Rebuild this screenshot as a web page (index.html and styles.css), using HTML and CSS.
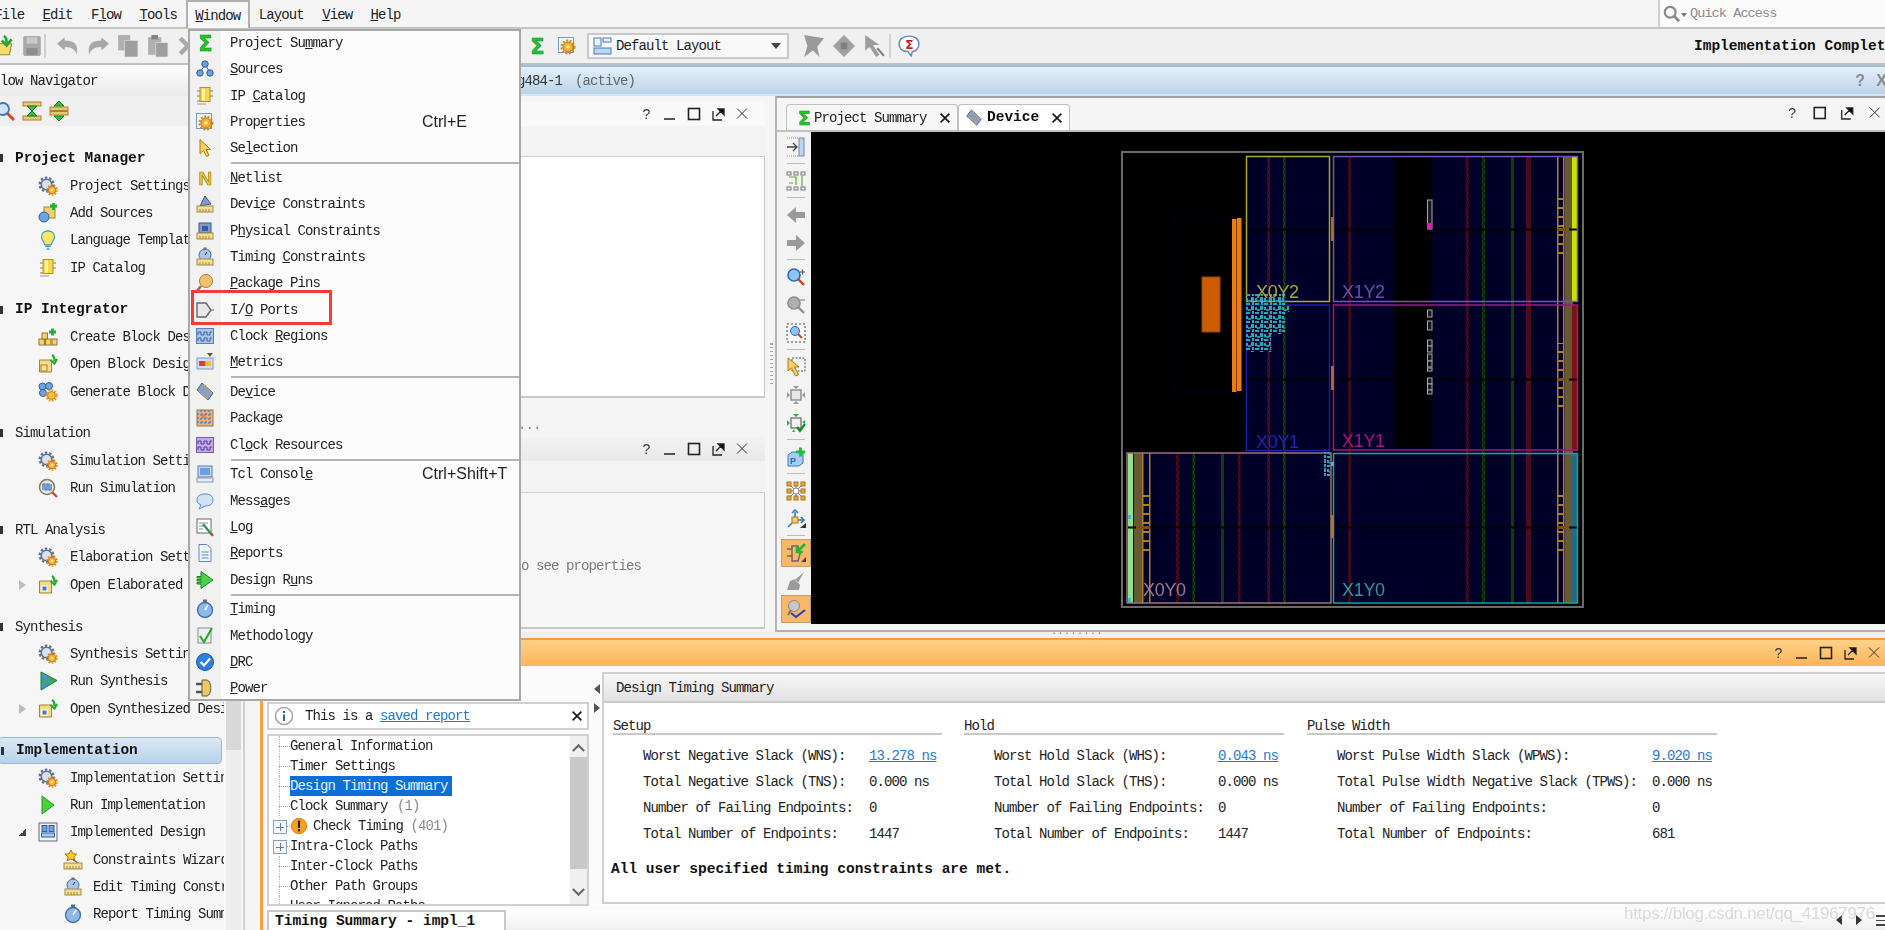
FILE: index.html
```html
<!DOCTYPE html>
<html lang="en">
<head>
<meta charset="utf-8">
<title>Vivado - Implemented Design</title>
<link rel="stylesheet" href="styles.css">
</head>
<body>
<svg class="sprite" aria-hidden="true">
  <defs>
    <symbol id="sigma" viewBox="0 0 20 20"><text x="10" y="17.5" text-anchor="middle" class="sig">Σ</text></symbol>
    <symbol id="sources" viewBox="0 0 20 20"><path d="M10 6 5 13M10 6l5 7" stroke="#557" fill="none"/><circle cx="10" cy="5" r="3.2" fill="#6fa0d8" stroke="#2f5f98"/><circle cx="5" cy="14" r="3.2" fill="#6fa0d8" stroke="#2f5f98"/><circle cx="15" cy="14" r="3.2" fill="#6fa0d8" stroke="#2f5f98"/></symbol>
    <symbol id="ip" viewBox="0 0 20 20"><path d="M2 5h3M2 10h3M2 15h3M15 5h3M15 10h3" stroke="#777"/><path d="M2 18h9" stroke="#999"/><rect x="5" y="1.5" width="10" height="14" fill="#f4d84a" stroke="#b8901a"/><rect x="7" y="2.5" width="3" height="12" fill="#fff3a8"/></symbol>
    <symbol id="props" viewBox="0 0 20 20"><rect x="1.5" y="1.5" width="15" height="15" fill="#eef3fa" stroke="#7d9ac0"/><circle cx="11" cy="11" r="6.5" fill="none" stroke="#d88a10" stroke-width="2" stroke-dasharray="2 1.5"/><circle cx="11" cy="11" r="5" fill="#f2b430" stroke="#b8760f"/><circle cx="11" cy="11" r="1.8" fill="#fff0a0"/></symbol>
    <symbol id="sel" viewBox="0 0 20 20"><path d="M5 1.5v14l3.5-3 3 6 2.5-1.2-3-5.8h4.5z" fill="#f6d060" stroke="#b07a10"/></symbol>
    <symbol id="netN" viewBox="0 0 20 20"><text x="10" y="17" text-anchor="middle" class="netn">N</text></symbol>
    <symbol id="rulerb" viewBox="0 0 20 20"><path d="M5 12 10 2l6 8z" fill="#7f9cc4" stroke="#3a5a8a"/><rect x="2" y="12" width="16" height="6" fill="#f2dc9a" stroke="#a88a3a"/><path d="M5 15v3M8 15v3M11 15v3M14 15v3" stroke="#a88a3a"/></symbol>
    <symbol id="rulerp" viewBox="0 0 20 20"><rect x="4" y="2" width="12" height="10" fill="#7f9cc4" stroke="#3a5a8a"/><rect x="7" y="5" width="6" height="5" fill="#2d5ea8"/><rect x="2" y="12" width="16" height="6" fill="#f2dc9a" stroke="#a88a3a"/><path d="M5 15v3M8 15v3M11 15v3M14 15v3" stroke="#a88a3a"/></symbol>
    <symbol id="rulert" viewBox="0 0 20 20"><circle cx="10" cy="8" r="6" fill="#a9c6e8" stroke="#44709f"/><rect x="8.5" y="0.5" width="3" height="2" fill="#667"/><path d="M10 8l2-3" stroke="#334"/><rect x="2" y="12" width="16" height="6" fill="#f2dc9a" stroke="#a88a3a"/><path d="M5 15v3M8 15v3M11 15v3M14 15v3" stroke="#a88a3a"/></symbol>
    <symbol id="pins" viewBox="0 0 20 20"><circle cx="11" cy="8" r="6.5" fill="#f2c070" stroke="#b47a20"/><path d="M6 13 2 18" stroke="#777" stroke-width="2.5"/></symbol>
    <symbol id="ioport" viewBox="0 0 20 20"><path d="M2 3h9l5 7-5 7H2z" fill="#e8e8e8" stroke="#666" stroke-width="1.4"/><path d="M16 10h3" stroke="#666"/></symbol>
    <symbol id="clkb" viewBox="0 0 20 20"><rect x="1.5" y="2.5" width="17" height="15" fill="#a8c4ea" stroke="#5a80b8"/><path d="M3 9V6h3v3h3V6h3v3h3V6h2M3 15v-3h3v3h3v-3h3v3h3v-3h2" fill="none" stroke="#3e5f98"/></symbol>
    <symbol id="clkp" viewBox="0 0 20 20"><rect x="1.5" y="2.5" width="17" height="15" fill="#c9a8e6" stroke="#7f5ab0"/><path d="M3 9V6h3v3h3V6h3v3h3V6h2M3 15v-3h3v3h3v-3h3v3h3v-3h2" fill="none" stroke="#3e3f98"/></symbol>
    <symbol id="metrics" viewBox="0 0 20 20"><path d="M12 1h6l-3 4z" fill="#555"/><rect x="2" y="6" width="16" height="11" fill="#cfe0f2" stroke="#7d9ac0"/><rect x="4" y="9" width="12" height="5" fill="#e8401c"/><rect x="10" y="9" width="6" height="5" fill="#f6c020"/></symbol>
    <symbol id="device" viewBox="0 0 20 20"><path d="M7 1l11 10-5 7L2 8z" fill="#8a9fc4" stroke="#4a5f88"/><path d="M4 9l9 8M9 3l8 8" stroke="#d8b040" stroke-width="1.4" stroke-dasharray="1.5 1"/></symbol>
    <symbol id="package" viewBox="0 0 20 20"><rect x="2" y="2" width="16" height="16" fill="#f0b070" stroke="#8a7a60"/><path d="M2 6h16M2 10h16M2 14h16M6 2v16M10 2v16M14 2v16" stroke="#4a7fd0" stroke-width="1.3" stroke-dasharray="2 2"/><rect x="6" y="6" width="4" height="4" fill="#d84"/></symbol>
    <symbol id="tcl" viewBox="0 0 20 20"><rect x="3" y="2" width="14" height="11" fill="#c4daf4" stroke="#5a7aa8"/><rect x="5" y="4" width="10" height="7" fill="#6ea0e0"/><rect x="2" y="14" width="16" height="4" fill="#e6ecf4" stroke="#8a9ab0"/></symbol>
    <symbol id="msg" viewBox="0 0 20 20"><path d="M10 3c5 0 8 2 8 6s-3 6-8 6l-6 3 2-4C3 13 2 11 2 9c0-4 3-6 8-6z" fill="#cfe2f8" stroke="#5a8ac8"/></symbol>
    <symbol id="log" viewBox="0 0 20 20"><rect x="2" y="2" width="14" height="14" fill="#fff" stroke="#667"/><path d="M4 6h9M4 9h6M4 12h4" stroke="#88a"/><path d="M8 7l9 11" stroke="#2a9a3a" stroke-width="2.2"/><path d="M16 16l2 3" stroke="#d33" stroke-width="2"/></symbol>
    <symbol id="report" viewBox="0 0 20 20"><path d="M4 1.5h8l4 4v13H4z" fill="#f2f6fc" stroke="#5a8ac8"/><path d="M6.5 9h7M6.5 12h7M6.5 15h7" stroke="#5a8ac8"/></symbol>
    <symbol id="runs" viewBox="0 0 20 20"><path d="M6 1.5 18 10 6 18.5V14H2v-1.500h4V11H2V9.500h4V8H2V6.500h4z" fill="#4ccf4c" stroke="#1a8a1a"/></symbol>
    <symbol id="watch" viewBox="0 0 20 20"><rect x="8" y="0.500" width="4" height="2.500" fill="#667"/><circle cx="10" cy="11" r="7.500" fill="#8fb8ea" stroke="#3e6ea8" stroke-width="1.3"/><path d="M10 11l3-5" stroke="#fff" stroke-width="1.500"/></symbol>
    <symbol id="method" viewBox="0 0 20 20"><rect x="3" y="2" width="13" height="15" fill="#eee" stroke="#889"/><path d="M5 10l4 6 8-14" fill="none" stroke="#2aa83a" stroke-width="2.200"/></symbol>
    <symbol id="drc" viewBox="0 0 20 20"><circle cx="10" cy="10" r="8.500" fill="#2e80e0" stroke="#1a5aa8"/><path d="M5.500 10l3.500 3.500 6-7" fill="none" stroke="#fff" stroke-width="2.200"/></symbol>
    <symbol id="power" viewBox="0 0 20 20"><path d="M7 2h5c5 1 5 15 0 16H7z" fill="#e8c868" stroke="#6a5a30"/><path d="M1 6h6M1 14h6" stroke="#555" stroke-width="2.400"/></symbol>
    <symbol id="gear" viewBox="0 0 20 20"><circle cx="8.500" cy="8.500" r="6.800" fill="none" stroke="#5d7690" stroke-width="2.400" stroke-dasharray="2.500 1.800"/><circle cx="8.500" cy="8.500" r="5.300" fill="#d9e2ec" stroke="#5d7690" stroke-width="1.500"/><circle cx="14" cy="14" r="5" fill="none" stroke="#e08a18" stroke-width="1.600" stroke-dasharray="1.800 1.300"/><circle cx="14" cy="14" r="3.800" fill="#f6b238" stroke="#c67a10"/><circle cx="14" cy="14" r="1.300" fill="#fff0a8"/></symbol>
    <symbol id="add" viewBox="0 0 20 20"><rect x="6" y="4" width="11" height="11" fill="#f2d070" stroke="#a8842a"/><circle cx="6" cy="14" r="5" fill="#6ea4e0" stroke="#2e5f9c"/><path d="M12 3h7M15.500 0v7" stroke="#20b030" stroke-width="2.800"/></symbol>
    <symbol id="bulb" viewBox="0 0 20 20"><path d="M10 1c4 0 6.500 2.500 6.500 6 0 3-2.500 4.500-3.500 8H7c-1-3.500-3.500-5-3.500-8 0-3.500 2.500-6 6.500-6z" fill="#fbe860" stroke="#4a9ad8" stroke-width="1.300"/><path d="M7.500 16.500h5M8.500 19h3" stroke="#4a9ad8" stroke-width="1.500"/></symbol>
    <symbol id="blocks" viewBox="0 0 20 20"><rect x="1" y="12" width="5.500" height="6" fill="#f2d070" stroke="#98782a"/><rect x="7.500" y="12" width="5.500" height="6" fill="#f2d070" stroke="#98782a"/><rect x="14" y="12" width="5" height="6" fill="#f2d070" stroke="#98782a"/><rect x="4" y="6" width="5.500" height="6" fill="#f2d070" stroke="#98782a"/><path d="M11 5h7M14.500 1.500v7" stroke="#20b030" stroke-width="2.800"/></symbol>
    <symbol id="openb" viewBox="0 0 20 20"><path d="M1.500 6h12v12h-12z" fill="#f6dc8a" stroke="#a8842a"/><rect x="3" y="11" width="6" height="6" fill="#f8e088" stroke="#a8842a"/><path d="M14 1c2 1 2.500 3 2.500 6M12.500 6l4 3.500L19 5" fill="none" stroke="#22aa30" stroke-width="2.200"/></symbol>
    <symbol id="openf" viewBox="0 0 20 20"><path d="M1.500 6h12v12h-12z" fill="#f6dc8a" stroke="#a8842a"/><rect x="4" y="11" width="5" height="5" fill="#3a7ad0" stroke="#fff"/><path d="M14 1c2 1 2.500 3 2.500 6M12.500 6l4 3.500L19 5" fill="none" stroke="#22aa30" stroke-width="2.200"/></symbol>
    <symbol id="genb" viewBox="0 0 20 20"><circle cx="4.500" cy="4.500" r="3.500" fill="#6ea4e0" stroke="#2e5f9c"/><circle cx="11" cy="4" r="3.500" fill="#6ea4e0" stroke="#2e5f9c"/><circle cx="5" cy="11" r="3.500" fill="#6ea4e0" stroke="#2e5f9c"/><circle cx="13.500" cy="13.500" r="5.400" fill="none" stroke="#e09a18" stroke-width="1.800" stroke-dasharray="1.800 1.300"/><circle cx="13.500" cy="13.500" r="4" fill="#f6c040" stroke="#c67a10"/></symbol>
    <symbol id="runsim" viewBox="0 0 20 20"><circle cx="9" cy="9" r="7.500" fill="#dce8f6" stroke="#8a7a50" stroke-width="1.500"/><path d="M5 12V6h2v6h2V6h2v6h2V6" fill="none" stroke="#3a6ab0" stroke-width="1.200"/><path d="M14.500 14.500 19 19" stroke="#d8401a" stroke-width="2.200"/></symbol>
    <symbol id="runsyn" viewBox="0 0 20 20"><path d="M3 1l16 8.500L3 19z" fill="#34b04a" stroke="#1a8030"/><circle cx="6" cy="6" r="2.500" fill="#4a90d8"/><circle cx="10" cy="10" r="2.500" fill="#4a90d8"/><circle cx="6" cy="14" r="2.500" fill="#4a90d8"/></symbol>
    <symbol id="play" viewBox="0 0 20 20"><path d="M4 1l12 9-12 9z" fill="#4ed03a" stroke="#1c9a20"/></symbol>
    <symbol id="impl" viewBox="0 0 20 20"><rect x="1" y="1" width="18" height="18" fill="#f2f5fa" stroke="#667"/><rect x="4" y="3.500" width="5" height="6" fill="#6ea4e0" stroke="#2e5f9c"/><rect x="11" y="3.500" width="5" height="6" fill="#6ea4e0" stroke="#2e5f9c"/><rect x="3.500" y="11" width="13" height="4" fill="#a8c8ee" stroke="#2e5f9c"/></symbol>
    <symbol id="wizard" viewBox="0 0 20 20"><path d="M8 0l1.800 3.600 3.900.6-2.800 2.700.7 3.900L8 9l-3.600 1.800.7-3.900L2.300 4.200l3.900-.6z" fill="#f6d020" stroke="#a87810"/><path d="M10 9l8 7" stroke="#8a6a20" stroke-width="1.500"/><rect x="1" y="13" width="18" height="6" fill="#f2dc9a" stroke="#a88a3a"/><path d="M4 16v3M7 16v3M10 16v3M13 16v3M16 16v3" stroke="#a88a3a"/></symbol>
    <symbol id="open" viewBox="0 0 20 20"><path d="M1 8h15l-2 10H1z" fill="#f6dc6a" stroke="#a8842a"/><path d="M9 1c2 1 2.500 3 2.500 6M7 5l4.500 4.500L16 4" fill="none" stroke="#20a830" stroke-width="2.400"/></symbol>
    <symbol id="save" viewBox="0 0 20 20"><rect x="2" y="1" width="16" height="18" rx="1.500" fill="#a8a8a8"/><rect x="5" y="2" width="10" height="6" fill="#c8c8c8"/><rect x="5" y="12" width="10" height="6" fill="#8c8c8c"/></symbol>
    <symbol id="undo" viewBox="0 0 20 20"><path d="M0 8l7-6v3c8 0 13 3 11 13-1-4-4-7-11-7v3z" fill="#a8a8a8"/></symbol>
    <symbol id="redo" viewBox="0 0 20 20"><path d="M20 8l-7-6v3C5 5 0 8 2 18c1-4 4-7 11-7v3z" fill="#a8a8a8"/></symbol>
    <symbol id="copy" viewBox="0 0 20 20"><rect x="1" y="0" width="11" height="14" fill="#b0b0b0"/><rect x="7" y="5" width="12" height="15" fill="#9e9e9e" stroke="#e0e0e0" stroke-width=".6"/></symbol>
    <symbol id="paste" viewBox="0 0 20 20"><rect x="1" y="2" width="12" height="16" fill="#b0b0b0"/><rect x="4" y="0" width="6" height="4" fill="#848484"/><rect x="8" y="7" width="11" height="13" fill="#9e9e9e" stroke="#e0e0e0" stroke-width=".6"/></symbol>
    <symbol id="cross" viewBox="0 0 20 20"><path d="M3 3l14 14M17 3 3 17" stroke="#a8a8a8" stroke-width="4"/></symbol>
    <symbol id="layout" viewBox="0 0 20 20"><rect x="1" y="2" width="7" height="8" fill="#eaf2fb" stroke="#4a7ab0"/><rect x="10" y="2" width="8" height="4" fill="#eaf2fb" stroke="#4a7ab0"/><rect x="1" y="12" width="17" height="6" fill="#bcd6f2" stroke="#4a7ab0"/></symbol>
    <symbol id="gray1" viewBox="0 0 20 20"><path d="M1 0l18 3-6 8 2 9-6-6-8 6 3-10z" fill="#9a9a9a"/></symbol>
    <symbol id="gray2" viewBox="0 0 20 20"><path d="M10 0l10 10-10 10L0 10z" fill="#a0a0a0"/><rect x="7" y="7" width="6" height="6" fill="#808080"/></symbol>
    <symbol id="gray3" viewBox="0 0 20 20"><path d="M2 0v14l4-3 6 9 3-2-6-9h6z" fill="#9c9c9c"/><path d="M13 12l6 7" stroke="#808080" stroke-width="2"/></symbol>
    <symbol id="comment" viewBox="0 0 20 20"><path d="M10 1c5 0 9 2.500 9 7s-3 7-6 7l-1 4-3-4C4 15 1 12.500 1 8s4-7 9-7z" fill="#fff" stroke="#5a8ac8" stroke-width="1.300"/><text x="10" y="12.500" text-anchor="middle" class="cmt">Σ</text></symbol>
    <symbol id="search" viewBox="0 0 20 20"><circle cx="8" cy="8" r="6" fill="#cfe4fa" stroke="#3a78c0" stroke-width="1.800"/><path d="M12.500 12.500 19 19" stroke="#d8401a" stroke-width="2.600"/></symbol>
    <symbol id="collapse" viewBox="0 0 20 20"><rect x="1" y="1" width="18" height="4" fill="#e8c878" stroke="#a8842a"/><rect x="1" y="15" width="18" height="4" fill="#e8c878" stroke="#a8842a"/><path d="M5 5h10l-5 5zM5 15h10l-5-5z" fill="#30c040" stroke="#1a8a20"/></symbol>
    <symbol id="expand" viewBox="0 0 20 20"><rect x="1" y="6" width="18" height="3.500" fill="#e8c878" stroke="#a8842a"/><rect x="1" y="10.500" width="18" height="3.500" fill="#e8c878" stroke="#a8842a"/><path d="M5 5l5-5 5 5zM5 15h10l-5 5z" fill="#30c040" stroke="#1a8a20"/></symbol>
    <symbol id="qs" viewBox="0 0 20 20"><circle cx="8" cy="8" r="6" fill="none" stroke="#8a8a8a" stroke-width="2.400"/><path d="M12 12l6 6" stroke="#8a8a8a" stroke-width="3"/></symbol>
    <symbol id="vpin" viewBox="0 0 20 20"><path d="M1 1h11M1 19h11" stroke="#888" stroke-dasharray="1 1"/><rect x="13" y="1" width="5" height="18" fill="#bcd4ee" stroke="#6a8ab0"/><path d="M1 10h9M7 6l4 4-4 4" fill="none" stroke="#444" stroke-width="1.300"/></symbol>
    <symbol id="sch" viewBox="0 0 20 20"><g fill="#eee" stroke="#777"><rect x="1" y="1" width="4" height="3"/><rect x="8" y="1" width="4" height="3"/><rect x="15" y="1" width="4" height="3"/><rect x="1" y="16" width="4" height="3"/><rect x="8" y="16" width="4" height="3"/><rect x="15" y="16" width="4" height="3"/></g><path d="M3 6h7v8M3 12h4M16 5v10" fill="none" stroke="#5fae2a" stroke-width="1.200"/></symbol>
    <symbol id="larrow" viewBox="0 0 20 20"><path d="M1 10l9-8v5h9v6h-9v5z" fill="#9a9a9a"/></symbol>
    <symbol id="rarrow" viewBox="0 0 20 20"><path d="M19 10l-9-8v5H1v6h9v5z" fill="#9a9a9a"/></symbol>
    <symbol id="zin" viewBox="0 0 20 20"><circle cx="8" cy="8" r="6" fill="#8cc4f6" stroke="#2a6ab0" stroke-width="1.600"/><path d="M12 12l6 6" stroke="#d8401a" stroke-width="2.400"/><path d="M14 5h5M16.500 2.500v5" stroke="#555" stroke-width="1.200"/></symbol>
    <symbol id="zout" viewBox="0 0 20 20"><circle cx="8" cy="8" r="6" fill="#b0b0b0" stroke="#8c8c8c" stroke-width="1.600"/><path d="M12 12l6 6" stroke="#8c8c8c" stroke-width="2.400"/><path d="M14 5h5" stroke="#888" stroke-width="1.200"/></symbol>
    <symbol id="zfit" viewBox="0 0 20 20"><rect x="1" y="1" width="18" height="18" fill="#f6f6f6" stroke="#444" stroke-dasharray="2 2"/><circle cx="9" cy="8" r="4.500" fill="#8cc4f6" stroke="#2a6ab0"/><path d="M12 11l4 4" stroke="#d8401a" stroke-width="2"/></symbol>
    <symbol id="sel2" viewBox="0 0 20 20"><rect x="6" y="1" width="13" height="13" fill="none" stroke="#555" stroke-dasharray="2 1.500"/><path d="M2 1v13l3.500-3 4 8 3-1.500-4-7.500H13z" fill="#f6d060" stroke="#b07a10"/></symbol>
    <symbol id="rt" viewBox="0 0 20 20"><rect x="5" y="5" width="10" height="10" fill="#e6e6e6" stroke="#8a8a8a" stroke-width="1.400"/><path d="M7 1h6l-3 3zM7 19h6l-3-3zM1 7v6l3-3zM19 7v6l-3-3z" fill="#9a9a9a"/></symbol>
    <symbol id="rtc" viewBox="0 0 20 20"><rect x="5" y="5" width="10" height="10" fill="#f2f2f2" stroke="#7a7a7a" stroke-width="1.400"/><path d="M7 1h6l-3 3zM1 7v6l3-3zM19 7v4l-3-2zM6 19h3l-1-3z" fill="#22bb33"/><path d="M11 14l3 4 5-7" fill="none" stroke="#118a22" stroke-width="2.200"/></symbol>
    <symbol id="pplus" viewBox="0 0 20 20"><path d="M2 8l4-3h11v11l-4 3H2z" fill="#a8ccf2" stroke="#3a78c0"/><text x="7" y="17" text-anchor="middle" class="ptxt">P</text><path d="M10 5h9M14.500 .5v9" stroke="#22c033" stroke-width="3"/></symbol>
    <symbol id="nodes" viewBox="0 0 20 20"><path d="M3 3l14 14M17 3 3 17M10 3v14M3 10h14" stroke="#555" stroke-width=".8"/><circle cx="10" cy="10" r="3" fill="#fff" stroke="#888"/><g fill="#e8a838" stroke="#a8741a"><rect x="1" y="1" width="4" height="4"/><rect x="8" y="1" width="4" height="4"/><rect x="15" y="1" width="4" height="4"/><rect x="1" y="8" width="4" height="4"/><rect x="15" y="8" width="4" height="4"/><rect x="1" y="15" width="4" height="4"/><rect x="8" y="15" width="4" height="4"/><rect x="15" y="15" width="4" height="4"/></g></symbol>
    <symbol id="move" viewBox="0 0 20 20"><rect x="6" y="8" width="6" height="6" fill="#f6d060" stroke="#a8741a"/><path d="M9 8V3M6 4l3-3 3 3M12 11h5M15 8l3 3-3 3M6 14l-4 4" fill="none" stroke="#3a78c0" stroke-width="1.600"/><path d="M14 19h6v-5z" fill="#333"/></symbol>
    <symbol id="ioact" viewBox="0 0 20 20"><path d="M1 6h5M1 13h5M6 3h6l2 8-2 7H6z" fill="none" stroke="#666" stroke-width="1.400"/><path d="M19 1l-8 8M11 3v6h6" fill="none" stroke="#20b833" stroke-width="2.600"/><path d="M15 19h5v-5z" fill="#444"/></symbol>
    <symbol id="broom" viewBox="0 0 20 20"><path d="M18 1 9 9l3 3zM1 19l3-9 5-2 5 6-1 5z" fill="#9a9a9a"/></symbol>
    <symbol id="pinact" viewBox="0 0 20 20"><circle cx="8" cy="7" r="5.500" fill="#c8c8c8" stroke="#888"/><path d="M5 11l-3 5" stroke="#777" stroke-width="2"/><path d="M5 14l5 4 9-7" fill="none" stroke="#2a3ac8" stroke-width="2"/></symbol>
    <symbol id="ctl-q" viewBox="0 0 16 16"><text x="8" y="13" text-anchor="middle" class="ctq">?</text></symbol>
    <symbol id="ctl-min" viewBox="0 0 16 16"><path d="M2 13h11" stroke="#222" stroke-width="1.500"/></symbol>
    <symbol id="ctl-max" viewBox="0 0 16 16"><rect x="2.500" y="2.500" width="11" height="11" fill="none" stroke="#222" stroke-width="1.600"/></symbol>
    <symbol id="ctl-pop" viewBox="0 0 16 16"><path d="M3 5v9h9" fill="none" stroke="#222" stroke-width="1.300"/><path d="M6 10l5-5M8 3h6v6z" stroke="#222" stroke-width="1.300"/></symbol>
    <symbol id="ctl-x" viewBox="0 0 16 16"><path d="M3 2.500l10 10M13 2.500 3 12.500" stroke="#333"/></symbol>
    <symbol id="tabx" viewBox="0 0 16 16"><path d="M3 3l10 10M13 3 3 13" stroke="#111" stroke-width="1.800"/></symbol>
    <symbol id="info" viewBox="0 0 20 20"><circle cx="10" cy="10" r="8.500" fill="#fff" stroke="#9aa4ae" stroke-width="1.500"/><rect x="9" y="8.500" width="2" height="6.500" fill="#2a6ab0"/><rect x="9" y="5" width="2" height="2" fill="#2a6ab0"/></symbol>
    <symbol id="warn" viewBox="0 0 20 20"><circle cx="10" cy="10" r="8.500" fill="#f6a020" stroke="#c87810"/><rect x="8.800" y="4" width="2.400" height="8" fill="#222"/><rect x="8.800" y="13.500" width="2.400" height="2.400" fill="#222"/></symbol>
    <pattern id="fabric" width="6" height="6" patternUnits="userSpaceOnUse"><rect width="6" height="6" fill="#000024"/><path d="M6 0H0V6" fill="none" stroke="#00004e" stroke-width=".5"/></pattern>
    <pattern id="cells" width="9" height="9" patternUnits="userSpaceOnUse"><rect x="0" y="0" width="3" height="4" fill="#25a8b8"/><rect x="4" y="1" width="2" height="3" fill="#25a8b8"/><rect x="6" y="3" width="3" height="2" fill="#1d8fa0"/><rect x="1" y="5" width="2" height="3" fill="#25a8b8"/><rect x="4" y="6" width="4" height="2" fill="#25a8b8"/></pattern>
    <pattern id="rungs" width="6" height="9" patternUnits="userSpaceOnUse"><rect width="6" height="2" fill="#b07c24"/></pattern>
    <pattern id="dash-r" width="3" height="6" patternUnits="userSpaceOnUse"><rect width="3" height="6" fill="#2e081a"/><rect width="1" height="3" fill="#560c22"/><rect x="2" y="3" width="1" height="3" fill="#560c22"/></pattern>
    <pattern id="dash-g" width="3" height="6" patternUnits="userSpaceOnUse"><rect width="3" height="6" fill="#06260a"/><rect width="1" height="3" fill="#0e5012"/><rect x="2" y="3" width="1" height="3" fill="#0e5012"/></pattern>
  </defs>
</svg>

<div class="app">
  <header class="menubar">
    <span class="mi first">File</span>
    <span class="mi"><u>E</u>dit</span>
    <span class="mi">F<u>l</u>ow</span>
    <span class="mi"><u>T</u>ools</span>
    <span class="mi active"><u>W</u>indow</span>
    <span class="mi">La<u>y</u>out</span>
    <span class="mi"><u>V</u>iew</span>
    <span class="mi"><u>H</u>elp</span>
    <div class="quick"><svg class="i18"><use href="#qs"/></svg><span class="qarrow"></span><span class="qtext">Quick Access</span></div>
  </header>

  <div class="toolbar">
    <div class="tb-left">
      <svg class="t22 tb-open"><use href="#open"/></svg>
      <svg class="t22"><use href="#save"/></svg>
      <span class="tsep ls"></span>
      <svg class="t22"><use href="#undo"/></svg>
      <svg class="t22"><use href="#redo"/></svg>
      <svg class="t22"><use href="#copy"/></svg>
      <svg class="t22"><use href="#paste"/></svg>
      <svg class="t22"><use href="#cross"/></svg>
    </div>
    <div class="tb-mid">
      <svg class="i"><use href="#sigma"/></svg>
      <svg class="i"><use href="#props"/></svg>
      <div class="combo"><svg class="i"><use href="#layout"/></svg><span>Default Layout</span><span class="caret"></span></div>
      <svg class="t22"><use href="#gray1"/></svg>
      <svg class="t22"><use href="#gray2"/></svg>
      <svg class="t22"><use href="#gray3"/></svg>
      <span class="tsep ms"></span>
      <svg class="t22"><use href="#comment"/></svg>
    </div>
    <span class="status b">Implementation Complete</span>
  </div>

  <div class="work">
    <aside class="nav">
      <div class="nav-head"><span>Flow Navigator</span></div>
      <div class="nav-tools">
        <svg class="i"><use href="#search"/></svg>
        <svg class="i"><use href="#collapse"/></svg>
        <svg class="i"><use href="#expand"/></svg>
      </div>
      <div class="nav-frame">
        <div class="nav-body">
          <section class="grp">
            <div class="gh b">Project Manager</div>
            <div class="row"><svg class="i"><use href="#gear"/></svg><span>Project Settings</span></div>
            <div class="row"><svg class="i"><use href="#add"/></svg><span>Add Sources</span></div>
            <div class="row"><svg class="i"><use href="#bulb"/></svg><span>Language Templates</span></div>
            <div class="row"><svg class="i"><use href="#ip"/></svg><span>IP Catalog</span></div>
          </section>
          <section class="grp">
            <div class="gh b">IP Integrator</div>
            <div class="row"><svg class="i"><use href="#blocks"/></svg><span>Create Block Design</span></div>
            <div class="row"><svg class="i"><use href="#openb"/></svg><span>Open Block Design</span></div>
            <div class="row"><svg class="i"><use href="#genb"/></svg><span>Generate Block Design</span></div>
          </section>
          <section class="grp">
            <div class="gh">Simulation</div>
            <div class="row"><svg class="i"><use href="#gear"/></svg><span>Simulation Settings</span></div>
            <div class="row"><svg class="i"><use href="#runsim"/></svg><span>Run Simulation</span></div>
          </section>
          <section class="grp">
            <div class="gh">RTL Analysis</div>
            <div class="row"><svg class="i"><use href="#gear"/></svg><span>Elaboration Settings</span></div>
            <div class="row"><i class="twist"></i><svg class="i"><use href="#openf"/></svg><span>Open Elaborated Design</span></div>
          </section>
          <section class="grp">
            <div class="gh">Synthesis</div>
            <div class="row"><svg class="i"><use href="#gear"/></svg><span>Synthesis Settings</span></div>
            <div class="row"><svg class="i"><use href="#runsyn"/></svg><span>Run Synthesis</span></div>
            <div class="row"><i class="twist"></i><svg class="i"><use href="#openf"/></svg><span>Open Synthesized Design</span></div>
          </section>
          <section class="grp">
            <div class="gh b sel-h">Implementation</div>
            <div class="row"><svg class="i"><use href="#gear"/></svg><span>Implementation Settings</span></div>
            <div class="row"><svg class="i"><use href="#play"/></svg><span>Run Implementation</span></div>
            <div class="row"><i class="twist open"></i><svg class="i"><use href="#impl"/></svg><span>Implemented Design</span></div>
            <div class="row deep"><svg class="i"><use href="#wizard"/></svg><span>Constraints Wizard</span></div>
            <div class="row deep"><svg class="i"><use href="#rulert"/></svg><span>Edit Timing Constraints</span></div>
            <div class="row deep"><svg class="i"><use href="#watch"/></svg><span>Report Timing Summary</span></div>
          </section>
        </div>
        <div class="nav-scroll"><div class="nav-thumb"></div></div>
      </div>
    </aside>

    <main class="content">
      <div class="band">
        <span class="band-title">g484-1</span><span class="band-state">(active)</span>
        <span class="band-ctl">?</span><span class="band-ctl">X</span>
      </div>
      <div class="upper">
        <div class="midcol">
          <div class="ph">
            <div class="ctl"><svg><use href="#ctl-q"/></svg><svg><use href="#ctl-min"/></svg><svg><use href="#ctl-max"/></svg><svg><use href="#ctl-pop"/></svg><svg><use href="#ctl-x"/></svg></div>
          </div>
          <div class="strip"></div>
          <div class="whitebox"></div>
          <div class="dots"><span>...</span></div>
          <div class="ph ph2">
            <div class="ctl"><svg><use href="#ctl-q"/></svg><svg><use href="#ctl-min"/></svg><svg><use href="#ctl-max"/></svg><svg><use href="#ctl-pop"/></svg><svg><use href="#ctl-x"/></svg></div>
          </div>
          <div class="strip strip2"></div>
          <div class="propbox"><span>Select an object to see properties</span></div>
        </div>
        <div class="vsplit"></div>
        <div class="devpanel">
          <div class="devhead">
            <div class="tab"><svg class="i18"><use href="#sigma"/></svg><span>Project Summary</span><svg class="tx"><use href="#tabx"/></svg></div>
            <div class="tab cur"><svg class="i18"><use href="#device"/></svg><span class="b">Device</span><svg class="tx"><use href="#tabx"/></svg></div>
            <div class="ctl wide"><svg><use href="#ctl-q"/></svg><svg><use href="#ctl-max"/></svg><svg><use href="#ctl-pop"/></svg><svg><use href="#ctl-x"/></svg></div>
          </div>
          <div class="devbody">
            <div class="vtools">
              <button class="vb"><svg class="i"><use href="#vpin"/></svg></button><i class="vs"></i>
              <button class="vb"><svg class="i"><use href="#sch"/></svg></button><i class="vs"></i>
              <button class="vb"><svg class="i"><use href="#larrow"/></svg></button>
              <button class="vb"><svg class="i"><use href="#rarrow"/></svg></button><i class="vs"></i>
              <button class="vb"><svg class="i"><use href="#zin"/></svg></button>
              <button class="vb"><svg class="i"><use href="#zout"/></svg></button>
              <button class="vb"><svg class="i"><use href="#zfit"/></svg></button><i class="vs"></i>
              <button class="vb"><svg class="i"><use href="#sel2"/></svg></button>
              <button class="vb"><svg class="i"><use href="#rt"/></svg></button>
              <button class="vb"><svg class="i"><use href="#rtc"/></svg></button><i class="vs"></i>
              <button class="vb"><svg class="i"><use href="#pplus"/></svg></button><i class="vs"></i>
              <button class="vb"><svg class="i"><use href="#nodes"/></svg></button>
              <button class="vb"><svg class="i"><use href="#move"/></svg></button><i class="vs"></i>
              <button class="vb on"><svg class="i"><use href="#ioact"/></svg></button>
              <button class="vb"><svg class="i"><use href="#broom"/></svg></button>
              <button class="vb on"><svg class="i"><use href="#pinact"/></svg></button>
            </div>
            <div class="canvas">
              <svg class="device" viewBox="811 132 1074 492">
                <rect x="1122" y="152" width="461" height="455" fill="none" stroke="#6a6a6a" stroke-width="2"/>
                <rect x="1174" y="218" width="58" height="174" fill="none" stroke="#000036" stroke-width=".8"/>
                <!-- fabric -->
                <rect x="1246" y="156" width="84" height="295" fill="url(#fabric)"/>
                <rect x="1333" y="156" width="245" height="447" fill="url(#fabric)"/>
                <rect x="1127" y="453" width="204" height="150" fill="url(#fabric)"/>
                <rect x="1393" y="157" width="39" height="291" fill="#000"/>
                <!-- columns -->
                <g fill="url(#dash-r)">
                  <rect x="1267" y="157" width="3" height="446"/><rect x="1348" y="157" width="3" height="446"/><rect x="1466" y="157" width="3" height="446"/><rect x="1176" y="453" width="3" height="150"/><rect x="1238" y="453" width="3" height="150"/>
                </g>
                <rect x="1526" y="157" width="5" height="446" fill="#4a0c1e"/>
                <g fill="url(#dash-g)">
                  <rect x="1283" y="157" width="3" height="446"/><rect x="1482" y="157" width="3" height="446"/><rect x="1192" y="453" width="3" height="150"/>
                </g>
                <g fill="#0a400c">
                  <rect x="1511" y="157" width="3" height="446"/><rect x="1221" y="453" width="3" height="150"/>
                </g>
                <!-- IO banks -->
                <rect x="1565" y="157" width="8" height="446" fill="#665a34"/>
                <g fill="#b07c24">
                  <rect x="1557" y="157" width="1.500" height="446"/><rect x="1563" y="157" width="1.500" height="446"/>
                  <rect x="1142" y="453" width="1.500" height="150"/><rect x="1149" y="453" width="1.500" height="150"/>
                </g>
                <g fill="url(#rungs)">
                  <rect x="1558" y="193" width="6" height="36"/><rect x="1558" y="232" width="6" height="28"/>
                  <rect x="1558" y="343" width="6" height="36"/><rect x="1558" y="382" width="6" height="28"/>
                  <rect x="1558" y="492" width="6" height="35"/><rect x="1558" y="530" width="6" height="28"/>
                  <rect x="1143" y="492" width="6" height="35"/><rect x="1143" y="530" width="6" height="28"/>
                </g>
                <rect x="1572" y="157" width="6" height="144" fill="#c4e400"/>
                <rect x="1572" y="305" width="6" height="146" fill="#801018"/>
                <rect x="1572" y="453" width="6" height="150" fill="#206c88"/>
                <rect x="1128" y="453" width="5" height="150" fill="#90e090"/>
                <rect x="1134" y="453" width="8" height="150" fill="#665a34"/>
                <rect x="1128" y="515" width="3" height="4" fill="#30c0d8"/><rect x="1128" y="598" width="3" height="4" fill="#30c0d8"/>
                <!-- row gaps -->
                <g fill="#000">
                  <rect x="1246" y="228.500" width="84" height="2"/><rect x="1333" y="228.500" width="245" height="2"/>
                  <rect x="1246" y="378.500" width="84" height="2"/><rect x="1333" y="378.500" width="245" height="2"/>
                  <rect x="1127" y="526.500" width="204" height="2"/><rect x="1333" y="526.500" width="245" height="2"/>
                </g>
                <rect x="1557" y="228" width="12" height="3" fill="#80501a"/><rect x="1557" y="378" width="12" height="3" fill="#80501a"/><rect x="1557" y="526" width="12" height="3" fill="#80501a"/><rect x="1136" y="526" width="14" height="3" fill="#80501a"/>
                <!-- region outlines -->
                <g fill="none" stroke-width="1.500">
                  <rect x="1246.500" y="156.500" width="83" height="145" stroke="#a8a830"/>
                  <rect x="1333.500" y="156.500" width="244" height="145" stroke="#7a50c0"/>
                  <rect x="1246.500" y="305" width="83" height="145.500" stroke="#1c1cb0"/>
                  <rect x="1333.500" y="305" width="244" height="145" stroke="#a01880"/>
                  <rect x="1127" y="453" width="204" height="150" stroke="#a07080"/>
                  <rect x="1333.500" y="453.500" width="244" height="149.500" stroke="#20a0a0"/>
                </g>
                <g fill="#a8683c"><rect x="1331" y="217" width="3" height="24"/><rect x="1331" y="366" width="3" height="24"/><rect x="1331" y="515" width="3" height="23" fill="#b07820"/></g>
                <!-- placed logic -->
                <rect x="1202" y="277" width="18" height="55" fill="#cc5c00" stroke="#9a4500"/>
                <rect x="1232" y="219" width="4.500" height="173" fill="#ee7a10"/>
                <rect x="1237" y="218" width="4.500" height="173" fill="#ee7a10"/>
                <rect x="1246" y="294" width="39" height="40" fill="url(#cells)"/>
                <rect x="1246" y="334" width="25" height="18" fill="url(#cells)"/>
                <rect x="1285" y="306" width="4" height="6" fill="url(#cells)"/>
                <rect x="1324" y="452" width="6" height="24" fill="url(#cells)"/>
                <rect x="1331" y="462" width="3" height="4" fill="#30c0d8"/>
                <!-- used sites -->
                <g fill="#1a1a1a" stroke="#a8a8a8">
                  <rect x="1427.500" y="200" width="4.500" height="29"/><rect x="1427.500" y="310" width="4.500" height="7"/><rect x="1427.500" y="321" width="4.500" height="9"/><rect x="1427.500" y="340" width="4.500" height="6"/><rect x="1427.500" y="346" width="4.500" height="6"/><rect x="1427.500" y="354" width="4.500" height="7"/><rect x="1427.500" y="361" width="4.500" height="6"/><rect x="1427.500" y="368" width="4.500" height="3"/><rect x="1427.500" y="378" width="4.500" height="6"/><rect x="1427.500" y="384" width="4.500" height="6"/><rect x="1427.500" y="390" width="4.500" height="4"/>
                </g>
                <rect x="1427" y="223" width="5" height="6" fill="#f010c0"/>
                <!-- labels -->
                <text x="1256" y="298" class="reg r02">X0Y2</text>
                <text x="1342" y="298" class="reg r12">X1Y2</text>
                <text x="1256" y="448" class="reg r01">X0Y1</text>
                <text x="1342" y="447" class="reg r11">X1Y1</text>
                <text x="1143" y="596" class="reg r00">X0Y0</text>
                <text x="1342" y="596" class="reg r10">X1Y0</text>
              </svg>
            </div>
          </div>
        </div>
      </div>
      <div class="hsplit"><span>........</span></div>

      <div class="lower">
        <div class="lower-head">
          <div class="ctl"><svg><use href="#ctl-q"/></svg><svg><use href="#ctl-min"/></svg><svg><use href="#ctl-max"/></svg><svg><use href="#ctl-pop"/></svg><svg><use href="#ctl-x"/></svg></div>
        </div>
        <div class="lower-body">
          <div class="leftcol">
            <div class="info"><svg class="i"><use href="#info"/></svg><span>This is a <a class="lnk">saved report</a></span><svg class="tx"><use href="#tabx"/></svg></div>
            <div class="tree">
              <ul class="tlist">
                <li>General Information</li>
                <li>Timer Settings</li>
                <li><span class="hl">Design Timing Summary</span></li>
                <li>Clock Summary <em>(1)</em></li>
                <li class="plus"><svg class="i18 warnic"><use href="#warn"/></svg><span>Check Timing <em>(401)</em></span></li>
                <li class="plus">Intra-Clock Paths</li>
                <li>Inter-Clock Paths</li>
                <li>Other Path Groups</li>
                <li>User Ignored Paths</li>
              </ul>
              <div class="tscroll"><i class="up"></i><div class="tthumb"></div><i class="down"></i></div>
            </div>
          </div>
          <div class="arrows"><i class="al"></i><i class="ar"></i></div>
          <div class="summary">
            <div class="sum-head">Design Timing Summary</div>
            <div class="sum-cols">
              <div class="col c1">
                <h3>Setup</h3>
                <dl>
                  <dt>Worst Negative Slack (WNS):</dt><dd><a class="lnk">13.278 ns</a></dd>
                  <dt>Total Negative Slack (TNS):</dt><dd>0.000 ns</dd>
                  <dt>Number of Failing Endpoints:</dt><dd>0</dd>
                  <dt>Total Number of Endpoints:</dt><dd>1447</dd>
                </dl>
              </div>
              <div class="col c2">
                <h3>Hold</h3>
                <dl>
                  <dt>Worst Hold Slack (WHS):</dt><dd><a class="lnk">0.043 ns</a></dd>
                  <dt>Total Hold Slack (THS):</dt><dd>0.000 ns</dd>
                  <dt>Number of Failing Endpoints:</dt><dd>0</dd>
                  <dt>Total Number of Endpoints:</dt><dd>1447</dd>
                </dl>
              </div>
              <div class="col c3">
                <h3>Pulse Width</h3>
                <dl>
                  <dt>Worst Pulse Width Slack (WPWS):</dt><dd><a class="lnk">9.020 ns</a></dd>
                  <dt>Total Pulse Width Negative Slack (TPWS):</dt><dd>0.000 ns</dd>
                  <dt>Number of Failing Endpoints:</dt><dd>0</dd>
                  <dt>Total Number of Endpoints:</dt><dd>681</dd>
                </dl>
              </div>
            </div>
            <p class="met b">All user specified timing constraints are met.</p>
          </div>
        </div>
        <div class="tabbar">
          <div class="btab b">Timing Summary - impl_1</div>
          <div class="tabnav"><i class="al"></i><i class="ar"></i><i class="mn"></i></div>
          <span class="wm">https://blog.csdn.net/qq_41967976</span>
        </div>
      </div>
    </main>
  </div>

  <div class="menu">
    <div class="mrow"><svg class="i"><use href="#sigma"/></svg><span>Project Su<u>m</u>mary</span></div>
    <div class="mrow"><svg class="i"><use href="#sources"/></svg><span><u>S</u>ources</span></div>
    <div class="mrow"><svg class="i"><use href="#ip"/></svg><span>IP <u>C</u>atalog</span></div>
    <div class="mrow"><svg class="i"><use href="#props"/></svg><span>Prop<u>e</u>rties</span><kbd>Ctrl+E</kbd></div>
    <div class="mrow"><svg class="i"><use href="#sel"/></svg><span>Se<u>l</u>ection</span></div>
    <hr>
    <div class="mrow"><svg class="i"><use href="#netN"/></svg><span><u>N</u>etlist</span></div>
    <div class="mrow"><svg class="i"><use href="#rulerb"/></svg><span>Devi<u>c</u>e Constraints</span></div>
    <div class="mrow"><svg class="i"><use href="#rulerp"/></svg><span>P<u>h</u>ysical Constraints</span></div>
    <div class="mrow"><svg class="i"><use href="#rulert"/></svg><span>Timing <u>C</u>onstraints</span></div>
    <div class="mrow"><svg class="i"><use href="#pins"/></svg><span><u>P</u>ackage Pins</span></div>
    <div class="mrow"><svg class="i"><use href="#ioport"/></svg><span>I/<u>O</u> Ports</span></div>
    <div class="mrow"><svg class="i"><use href="#clkb"/></svg><span>Clock <u>R</u>egions</span></div>
    <div class="mrow"><svg class="i"><use href="#metrics"/></svg><span><u>M</u>etrics</span></div>
    <hr>
    <div class="mrow"><svg class="i"><use href="#device"/></svg><span>De<u>v</u>ice</span></div>
    <div class="mrow"><svg class="i"><use href="#package"/></svg><span>Packa<u>g</u>e</span></div>
    <div class="mrow"><svg class="i"><use href="#clkp"/></svg><span>Cl<u>o</u>ck Resources</span></div>
    <hr>
    <div class="mrow"><svg class="i"><use href="#tcl"/></svg><span>Tcl Consol<u>e</u></span><kbd>Ctrl+Shift+T</kbd></div>
    <div class="mrow"><svg class="i"><use href="#msg"/></svg><span>Mess<u>a</u>ges</span></div>
    <div class="mrow"><svg class="i"><use href="#log"/></svg><span><u>L</u>og</span></div>
    <div class="mrow"><svg class="i"><use href="#report"/></svg><span><u>R</u>eports</span></div>
    <div class="mrow"><svg class="i"><use href="#runs"/></svg><span>Design R<u>u</u>ns</span></div>
    <hr>
    <div class="mrow"><svg class="i"><use href="#watch"/></svg><span><u>T</u>iming</span></div>
    <div class="mrow"><svg class="i"><use href="#method"/></svg><span>Methodolo<u>g</u>y</span></div>
    <div class="mrow"><svg class="i"><use href="#drc"/></svg><span><u>D</u>RC</span></div>
    <div class="mrow"><svg class="i"><use href="#power"/></svg><span><u>P</u>ower</span></div>
    <div class="callout"></div>
  </div>
</div>
</body>
</html>
```

FILE: styles.css
```css
* { box-sizing: border-box; }
html, body { margin: 0; padding: 0; height: 100%; }
body { width: 1885px; height: 930px; overflow: hidden; background: #f5f5f5; }

.sprite { position: absolute; width: 0; height: 0; }
.sig { font: bold 21px "DejaVu Sans", sans-serif; fill: #22c42a; stroke: #0c8f14; stroke-width: .5; }
.netn { font: bold 19px "Liberation Sans", sans-serif; fill: #e8c23a; stroke: #a47c10; stroke-width: .6; }
.cmt { font: bold 11px "DejaVu Sans", sans-serif; fill: #d81820; }
.ptxt { font: bold 9px "Liberation Sans", sans-serif; fill: #2a6ab0; }
.ctq { font: 14px "Liberation Sans", sans-serif; fill: #333; }

.app {
  position: relative;
  width: 1885px;
  height: 930px;
  display: flex;
  flex-direction: column;
  overflow: hidden;
  font: 14px/1 "Liberation Mono", "DejaVu Sans Mono", monospace;
  letter-spacing: -.9px;
  color: #222;
  filter: blur(.35px);
}
.b { font-weight: bold; font-size: 14.5px; letter-spacing: 0; color: #111; }
.i { width: 20px; height: 20px; flex: none; }
.t22 { width: 22px; height: 22px; flex: none; }
.i18 { width: 18px; height: 18px; flex: none; }
.tx { width: 14px; height: 14px; flex: none; }

/* menu bar */
.menubar {
  height: 29px;
  flex: none;
  display: flex;
  align-items: center;
  background: #f5f5f5;
  border-bottom: 2px solid #c4c4c4;
}
.mi { padding: 2px 9.2px 0; height: 100%; display: flex; align-items: center; white-space: pre; }
.mi.first { margin-left: -15px; }
.mi.active {
  height: 28px;
  margin-top: 1px;
  background: #f8f8f8;
  border: 2px solid #b0b0b0;
  border-bottom: 0;
  padding: 1px 7.200px 0;
}
.quick {
  margin-left: auto;
  width: 227px;
  height: 27px;
  display: flex;
  align-items: center;
  padding-left: 3px;
  background: #fafafa;
  border-left: 2px solid #cfcfcf;
}
.qarrow { width: 0; height: 0; margin: 2px 3px 0 0; border: 3px solid transparent; border-top: 4px solid #777; border-bottom: 0; }
.qtext { color: #8a8a8a; font-size: 13.500px; }

/* main toolbar */
.toolbar {
  height: 36px;
  flex: none;
  display: flex;
  align-items: center;
  background: #f0f0f0;
  border-bottom: 2px solid #c0c0c0;
  overflow: hidden;
}
.tb-left { width: 525px; flex: none; display: flex; align-items: center; gap: 8px; }
.tb-open { margin-left: -6px; margin-right: -3px; }
.tsep { width: 2px; height: 24px; background: #d0d0d0; flex: none; }
.tsep.ls { margin: 0 3px 0 -7px; }
.tsep.ms { margin: 0 -1px 0 -4px; }
.tb-mid { width: 1169px; flex: none; display: flex; align-items: center; gap: 8px; }
.tb-mid > svg:first-child { margin-left: 2px; }
.tb-mid > svg:nth-child(2) { margin-left: 2px; }
.combo {
  width: 202px;
  height: 26px;
  margin: 0 6px 0 2px;
  display: flex;
  align-items: center;
  gap: 3px;
  padding-left: 4px;
  background: #f8f8f8;
  border: 2px solid #c8c8c8;
  position: relative;
}
.status { white-space: nowrap; }
.caret { margin-left: auto; margin-right: 6px; width: 0; height: 0; border: 5px solid transparent; border-top: 6px solid #444; border-bottom: 0; }

/* work area */
.work { flex: 1; display: flex; min-height: 0; }

/* flow navigator */
.nav { width: 245px; flex: none; display: flex; flex-direction: column; background: #f6f6f6; border-right: 2px solid #d0d0d0; }
.nav-head { height: 31px; flex: none; display: flex; align-items: center; background: linear-gradient(#fff, #e9e9e9); }
.nav-head span { margin-left: -7.500px; white-space: nowrap; font-size: 14px; }
.nav-tools { height: 30px; flex: none; display: flex; align-items: center; background: #f0f0f0; padding-left: 0; gap: 7px; }
.nav-tools svg:first-child { margin-left: -5px; }
.nav-frame { flex: 1; display: flex; min-height: 0; }
.nav-body { width: 224px; flex: none; overflow: hidden; padding-top: 18.800px; }
.grp { margin-bottom: 14.700px; }
.gh, .row { height: 27.300px; display: flex; align-items: center; white-space: nowrap; }
.gh::before { content: ""; width: 3px; height: 8px; background: #333; margin-right: 12px; flex: none; }
.sel-h {
  margin: 0 2px 0 -2px;
  padding-left: 2px;
  background: linear-gradient(#dbe8f6, #b7d2ec);
  border: 1px solid #9ab8dc;
  border-radius: 4px;
}
.row { padding-left: 38px; gap: 12px; }
.row.deep { padding-left: 63px; gap: 10px; }
.twist { width: 0; height: 0; flex: none; margin-left: -19px; margin-right: 0; border: 5px solid transparent; border-left: 7px solid #bcbcbc; border-right: 0; }
.twist.open { border: 0; width: 7px; height: 7px; background: linear-gradient(135deg, transparent 50%, #444 50%); }
.nav-scroll { width: 15px; flex: none; margin-left: 2px; background: #ededed; }
.nav-thumb { height: 624px; background: #d8d8d8; }

/* content */
.content { flex: 1; min-width: 0; display: flex; flex-direction: column; }
.band {
  height: 31px;
  flex: none;
  display: flex;
  align-items: center;
  padding-left: 272px;
  background: linear-gradient(#e6f0fa, #b9d3ea);
  border-top: 2px solid #9fbfe2;
  border-bottom: 2px solid #d6e3f0;
}
.band-title { color: #333; }
.band-state { margin-left: 13px; color: #666; }
.band-ctl { color: #8a8a8a; font-weight: bold; font-family: "Liberation Sans", sans-serif; font-size: 16px; }
.band-ctl:nth-of-type(3) { margin-left: auto; margin-right: 12px; }
.band-ctl:last-child { margin-right: -1px; }

.upper { height: 536px; flex: none; display: flex; }
.midcol { width: 520px; flex: none; display: flex; flex-direction: column; background: #f5f5f5; }
.ph { height: 25px; margin-top: 5px; flex: none; display: flex; align-items: center; justify-content: flex-end; background: #f9f9f9; padding-right: 11px; }
.ph2 { height: 24px; margin-top: 0; background: linear-gradient(#f2f2f2, #e9e9e9); }
.strip { height: 31px; flex: none; background: #f3f3f3; border-bottom: 1px solid #d0d0d0; }
.strip2 { height: 32px; }
.whitebox { height: 241px; flex: none; background: #fff; border-right: 1px solid #c8c8c8; border-bottom: 2px solid #c8c8c8; }
.dots { height: 39px; flex: none; padding: 20px 0 0 273px; color: #888; }
.propbox {
  height: 136px;
  flex: none;
  background: #f6f6f6;
  border-right: 1px solid #c8c8c8;
  border-bottom: 2px solid #c8c8c8;
  padding: 66px 0 0 141px;
  color: #7a7a7a;
  white-space: nowrap;
  overflow: hidden;
}
.ctl { display: flex; align-items: center; }
.ctl svg { width: 24px; height: 16px; flex: none; }
.ctl.wide { margin-left: auto; margin-right: -3px; align-self: flex-start; padding-top: 7px; }
.ctl.wide svg { width: 27.500px; }

.vsplit { width: 10px; flex: none; background: repeating-linear-gradient(#a8a8a8 0 1.500px, transparent 1.500px 4px) 5px 247px / 3px 41px no-repeat; }

.devpanel { flex: 1; min-width: 0; display: flex; flex-direction: column; border-top: 2px solid #a0a0a0; border-left: 2px solid #b4b4b4; border-bottom: 2px solid #b0b0b0; background: #f5f5f5; }
.devhead { height: 34px; flex: none; display: flex; align-items: flex-end; padding-left: 9px; background: #f5f5f5; border-bottom: 2px solid #c0c0c0; }
.tab { height: 26px; display: flex; align-items: center; gap: 1px; padding-left: 8px; background: #f6f6f6; border: 1px solid #c0c0c0; border-bottom: 0; border-radius: 4px 4px 0 0; }
.tab:nth-child(1) { width: 172px; }
.tab.cur { width: 112px; background: #fff; gap: 4px; padding-left: 6px; }
.tab .tx { margin-left: auto; margin-right: 5px; }
.devbody { height: 492px; flex: none; display: flex; }
.vtools { width: 34px; flex: none; display: flex; flex-direction: column; align-items: center; padding-top: 1px; background: #f3f3f3; }
.vb { width: 30px; height: 28px; flex: none; padding: 0; border: 0; background: none; display: flex; align-items: center; justify-content: center; margin-left: 3px; }
.vb.on { background: #f8b868; border: 1px solid #c0a070; }
.vs { height: 6px; width: 18px; flex: none; margin-left: 3px; background: linear-gradient(#bbb, #bbb) 0 2px / 100% 1px no-repeat; }
.canvas { flex: 1; min-width: 0; background: #000; position: relative; overflow: hidden; }
.device { display: block; width: 1074px; height: 492px; }
.reg { font: 18px "Liberation Sans", sans-serif; letter-spacing: -.3px; }
.r02 { fill: #a8a830; } .r12 { fill: #6e4eae; } .r01 { fill: #2424b0; } .r11 { fill: #a01880; } .r00 { fill: #a07888; } .r10 { fill: #2a9a9a; }

.hsplit { height: 6px; flex: none; text-align: center; background: #f0f0f0; color: #888; font-size: 10px; line-height: 0; padding-left: 24px; letter-spacing: .5px; overflow: hidden; }

/* lower panel */
.lower { flex: 1; min-height: 0; margin-left: 15px; display: flex; flex-direction: column; border-left: 3px solid #ff9f40; background: #f5f5f5; }
.lower-head { height: 28px; flex: none; display: flex; align-items: center; justify-content: flex-end; background: linear-gradient(#ffd286, #ffb45a); border-top: 2px solid #f0a040; }
.lower-head .ctl { margin-right: -1px; }
.lower-body { height: 244px; flex: none; display: flex; background: #fbfbfb; }
.leftcol { width: 322px; flex: none; margin-left: 4px; display: flex; flex-direction: column; justify-content: flex-end; }
.info { height: 28px; flex: none; display: flex; align-items: center; gap: 8px; background: #fff; padding-left: 5px; border: 2px solid #d0d0d0; }
.info span { margin-right: auto; margin-left: 3px; }
.info .tx { margin-right: 3px; }
.lnk { color: #1d7ad6; text-decoration: underline; }
.tree { height: 172px; flex: none; margin-top: 4px; margin-bottom: 4px; display: flex; background: #fff; border: 2px solid #d0d0d0; overflow: hidden; }
.tlist { list-style: none; margin: 0; padding: 0; flex: 1; min-width: 0; }
.tlist li { height: 20px; display: flex; align-items: center; gap: 2px; padding-left: 21px; white-space: pre; position: relative; }
.tlist li::before { content: ""; position: absolute; left: 10px; top: 10px; width: 11px; border-top: 1px dotted #999; }
.tlist li::after { content: ""; position: absolute; left: 10px; top: 0; height: 20px; border-left: 1px dotted #bbb; }
.tlist li.plus::before { left: 15px; width: 6px; }
.tlist li.plus::after { left: 4px; top: 4px; width: 12px; height: 12px; border: 1px solid #8aa0c0; background: linear-gradient(#5a7ab0, #5a7ab0) 50% 50% / 8px 1px no-repeat, linear-gradient(#5a7ab0, #5a7ab0) 50% 50% / 1px 8px no-repeat, #f4f6fa; }
.tlist em { font-style: normal; color: #8a8a8a; }
.hl { background: #0a6fd6; color: #e8f2ff; height: 20px; display: flex; align-items: center; width: 162px; }
.warnic { margin-right: 3px; }
.tscroll { width: 17px; flex: none; display: flex; flex-direction: column; align-items: center; background: #f0f0f0; }
.tscroll i { flex: none; width: 9px; height: 9px; margin: 7px 0; border-left: 2px solid #666; border-top: 2px solid #666; transform: rotate(45deg) translate(2px, 2px); }
.tscroll i.down { margin-top: auto; transform: rotate(225deg) translate(2px, 2px); }
.tthumb { width: 100%; height: 112px; background: #c8c8c8; margin-top: -2px; }
.arrows { width: 13px; flex: none; display: flex; flex-direction: column; gap: 9px; align-items: center; padding-top: 18px; padding-left: 2px; }
.al { width: 0; height: 0; border: 5.500px solid transparent; border-right: 6px solid #555; border-left: 0; }
.ar { width: 0; height: 0; border: 5.500px solid transparent; border-left: 6px solid #555; border-right: 0; }
.summary { flex: 1; min-width: 0; margin-top: 6px; margin-bottom: 6px; background: #fff; border: 2px solid #cfcfcf; border-right: 0; }
.sum-head { height: 29px; display: flex; align-items: center; padding-left: 12px; background: linear-gradient(#f6f6f6, #e2e2e2); border-bottom: 2px solid #c8c8c8; }
.sum-cols { display: flex; padding: 16px 0 0 9px; }
.col h3 { margin: 0 0 8px; height: 16px; font: inherit; letter-spacing: inherit; border-bottom: 2px solid #c8c8c8; }
.c1 { width: 329px; margin-right: 22px; }
.c2 { width: 320px; margin-right: 23px; }
.c3 { width: 410px; }
dl { margin: 0; padding-left: 30px; display: grid; grid-auto-rows: 26px; align-items: center; white-space: pre; }
.c1 dl { grid-template-columns: 226px 1fr; }
.c2 dl { grid-template-columns: 224px 1fr; }
.c3 dl { grid-template-columns: 315px 1fr; }
dd { margin: 0; }
.met { margin: 15px 0 0 7px; }
.tabbar { flex: 1; min-height: 0; display: flex; align-items: stretch; position: relative; background: linear-gradient(#fff, #f0f0f0); }
.btab { width: 239px; margin-left: 4px; display: flex; align-items: center; padding-left: 6px; background: #fff; border: 2px solid #c8c8c8; border-bottom: 0; white-space: pre; }
.tabnav { margin-left: auto; display: flex; align-items: center; gap: 14px; }
.tabnav .al { border-right-color: #333; }
.tabnav .ar { border-left-color: #333; }
.tabnav .mn { width: 9px; height: 11px; border-top: 2px solid #444; border-bottom: 2px solid #444; background: linear-gradient(#444, #444) 0 50% / 100% 1px no-repeat; }
.wm { position: absolute; right: 10px; top: -6px; font: 17px "Liberation Sans", sans-serif; letter-spacing: -.3px; color: rgba(205, 205, 205, .75); white-space: nowrap; }

/* dropdown */
.menu {
  position: absolute;
  left: 188px;
  top: 29px;
  width: 333px;
  height: 672px;
  border: 2px solid #a8a8a8;
  background: linear-gradient(90deg, #f1f1f1 31px, #fcfcfc 31px);
}
.mrow { height: 26.300px; display: grid; grid-template-columns: 31px 201px 1fr; align-items: center; justify-items: start; white-space: pre; }
.mrow:first-child { margin-top: -1px; }
.mrow svg { justify-self: center; margin-right: 2px; }
.mrow span { padding-left: 9px; }
kbd { font: 16px/1 "Liberation Sans", sans-serif; letter-spacing: 0; color: #222; white-space: nowrap; }
.menu hr { margin: 0 0 0 41px; height: 3.500px; border: 0; background: linear-gradient(#b4b4b4, #b4b4b4) 0 1px / 100% 2px no-repeat; }
.callout { position: absolute; left: 1px; top: 259px; width: 141px; height: 35px; border: 3px solid #f43a3a; }
```
